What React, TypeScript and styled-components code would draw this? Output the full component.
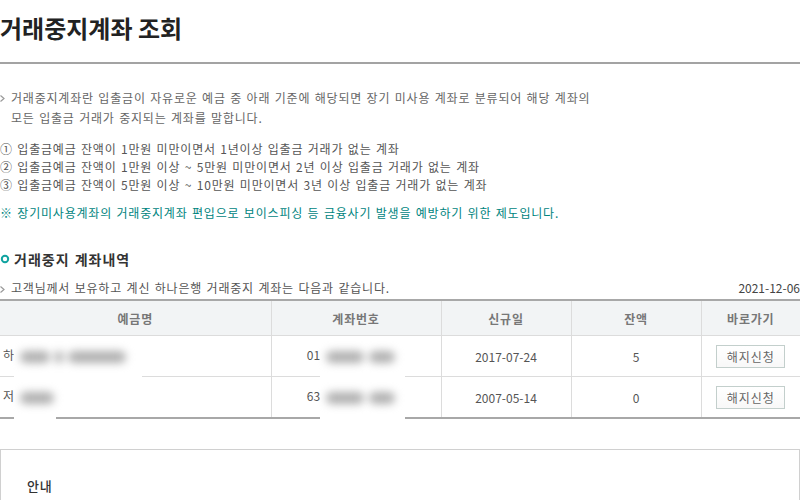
import React from "react";
import styled, { createGlobalStyle } from "styled-components";

// --- 전역 스타일 ---
const GlobalStyle = createGlobalStyle`
  html, body {
    margin: 0;
    padding: 0;
    background: #fff;
  }
  body {
    font-family: "Noto Sans CJK KR", "Noto Sans", sans-serif;
    font-size: 12px;
    color: #555;
  }
`;

// --- 데이터 ---
type Account = {
  head: string;
  nameBlur: number[];
  nameWidth: number;
  accHead: string;
  opened: string;
  balance: string;
};

const accounts: Account[] = [
  { head: "하", nameBlur: [30, 8, 58], nameWidth: 128, accHead: "01", opened: "2017-07-24", balance: "5" },
  { head: "저", nameBlur: [34], nameWidth: 42, accHead: "63", opened: "2007-05-14", balance: "0" },
];

const rules = [
  "① 입출금예금 잔액이 1만원 미만이면서 1년이상 입출금 거래가 없는 계좌",
  "② 입출금예금 잔액이 1만원 이상 ~ 5만원 미만이면서 2년 이상 입출금 거래가 없는 계좌",
  "③ 입출금예금 잔액이 5만원 이상 ~ 10만원 미만이면서 3년 이상 입출금 거래가 없는 계좌",
];

// --- 레이아웃 ---
const Page = styled.div`
  width: 800px;
  letter-spacing: 0.8px;
  word-spacing: 1px;
`;

const Header = styled.header`
  height: 64px;
  border-bottom: 2px solid #a3a3a3;
  box-sizing: border-box;
  padding-top: 15px;
`;

const Title = styled.h1`
  margin: 0;
  font-size: 24px;
  line-height: 26px;
  font-weight: 700;
  color: #222;
  letter-spacing: 0;
  word-spacing: 0;
`;

const Intro = styled.div`
  margin-top: 24px;
  display: flex;
  color: #666;
  line-height: 20px;
`;

const Bullet = styled.span`
  flex: 0 0 11px;
  display: flex;
  justify-content: flex-start;
  padding-top: 7px;
  height: 6px;
`;

const RuleList = styled.ul`
  list-style: none;
  margin: 12px 0 0;
  padding: 0;
  line-height: 18px;
  color: #555;
`;

const Notice = styled.p`
  margin: 10px 0 0;
  line-height: 18px;
  color: #00847e;
`;

const SectionTitle = styled.h2`
  margin: 28px 0 0;
  display: flex;
  align-items: center;
  gap: 4px;
  font-size: 14px;
  line-height: 18px;
  font-weight: 700;
  color: #333;
  letter-spacing: 1px;
`;

const SubRow = styled.div`
  margin-top: 11px;
  display: flex;
  align-items: center;
  justify-content: space-between;
  line-height: 18px;
`;

const SubText = styled.span`
  display: flex;
  color: #555;
`;

const DateText = styled.span`
  color: #444;
  letter-spacing: 0;
`;

// --- 테이블 ---
const Table = styled.table`
  margin-top: 2px;
  width: 800px;
  border-collapse: collapse;
  table-layout: fixed;
  border-top: 2px solid #a8a8a8;
  border-bottom: 2px solid #a8a8a8;
`;

const Th = styled.th`
  height: 34px;
  padding: 0;
  background: #f2f4f5;
  color: #777;
  font-weight: 700;
  font-size: 12px;
  text-align: center;
  border-left: 1px solid #dcdcdc;
  border-bottom: 1px solid #dcdcdc;
  &:first-child {
    border-left: none;
  }
`;

const Td = styled.td<{ $align?: "left" | "center" }>`
  height: 40px;
  padding: 0 0 0 ${(p) => (p.$align === "left" ? "3px" : "0")};
  text-align: ${(p) => p.$align ?? "center"};
  color: #555;
  letter-spacing: 0;
  border-left: 1px solid #dcdcdc;
  border-bottom: 1px solid #dcdcdc;
  white-space: nowrap;
  &:first-child {
    border-left: none;
  }
`;

const Mask = styled.span<{ $w: number }>`
  position: relative;
  display: inline-block;
  vertical-align: middle;
  width: ${(p) => p.$w}px;
  height: 18px;
  &::before {
    content: "";
    position: absolute;
    left: 0;
    right: 0;
    top: -8px;
    bottom: -14px;
    background: #fff;
  }
`;

const Blobs = styled.span`
  position: relative;
  display: flex;
  align-items: center;
  height: 18px;
  padding-left: 6px;
  filter: blur(4.5px);
`;

const Blob = styled.span<{ $w: number }>`
  display: block;
  flex: 0 0 ${(p) => p.$w}px;
  height: 12px;
  margin-right: 5px;
  background: #b0b0b0;
  border-radius: 6px;
`;

const CancelButton = styled.button`
  width: 69px;
  height: 23px;
  padding: 0;
  border: 1px solid #c3cfcc;
  background: linear-gradient(#fff, #f8f8f8);
  color: #666;
  font-family: inherit;
  font-size: 12px;
  letter-spacing: 1px;
  cursor: pointer;
`;

// --- 안내 박스 ---
const InfoBox = styled.section`
  margin-top: 30px;
  width: 800px;
  box-sizing: border-box;
  border: 1px solid #d0d0d0;
  border-bottom: none;
  padding: 27px 26px 20px;
`;

const InfoTitle = styled.h3`
  margin: 0;
  font-size: 13px;
  line-height: 18px;
  font-weight: 500;
  color: #333;
`;

// --- 아이콘 ---
const Chevron = () => (
  <svg width="5" height="7" viewBox="0 0 5 7">
    <path d="M0.5 0.5 L4 3.5 L0.5 6.5" fill="none" stroke="#9a9a9a" strokeWidth="1.2" />
  </svg>
);

const Ring = () => (
  <svg width="10" height="10" viewBox="0 0 10 10">
    <circle cx="5" cy="5" r="3.2" fill="none" stroke="#11a3a0" strokeWidth="2" />
  </svg>
);

const App = () => (
  <>
    <GlobalStyle />
    <Page>
      <Header>
        <Title>거래중지계좌 조회</Title>
      </Header>

      <Intro>
        <Bullet>
          <Chevron />
        </Bullet>
        <span>
          거래중지계좌란 입출금이 자유로운 예금 중 아래 기준에 해당되면 장기 미사용 계좌로 분류되어 해당 계좌의
          <br />
          모든 입출금 거래가 중지되는 계좌를 말합니다.
        </span>
      </Intro>

      <RuleList>
        {rules.map((r) => (
          <li key={r}>{r}</li>
        ))}
      </RuleList>

      <Notice>※ 장기미사용계좌의 거래중지계좌 편입으로 보이스피싱 등 금융사기 발생을 예방하기 위한 제도입니다.</Notice>

      <SectionTitle>
        <Ring />
        거래중지 계좌내역
      </SectionTitle>

      <SubRow>
        <SubText>
          <Bullet>
            <Chevron />
          </Bullet>
          고객님께서 보유하고 계신 하나은행 거래중지 계좌는 다음과 같습니다.
        </SubText>
        <DateText>2021-12-06</DateText>
      </SubRow>

      <Table>
        <colgroup>
          <col style={{ width: 271 }} />
          <col style={{ width: 170 }} />
          <col style={{ width: 130 }} />
          <col style={{ width: 130 }} />
          <col style={{ width: 99 }} />
        </colgroup>
        <thead>
          <tr>
            <Th>예금명</Th>
            <Th>계좌번호</Th>
            <Th>신규일</Th>
            <Th>잔액</Th>
            <Th>바로가기</Th>
          </tr>
        </thead>
        <tbody>
          {accounts.map((a) => (
            <tr key={a.opened}>
              <Td $align="left">
                {a.head}
                <Mask $w={a.nameWidth}>
                  <Blobs>
                    {a.nameBlur.map((w, i) => (
                      <Blob key={i} $w={w} />
                    ))}
                  </Blobs>
                </Mask>
              </Td>
              <Td>
                {a.accHead}
                <Mask $w={85}>
                  <Blobs>
                    <Blob $w={38} />
                    <Blob $w={26} />
                  </Blobs>
                </Mask>
              </Td>
              <Td>{a.opened}</Td>
              <Td>{a.balance}</Td>
              <Td>
                <CancelButton type="button">해지신청</CancelButton>
              </Td>
            </tr>
          ))}
        </tbody>
      </Table>

      <InfoBox>
        <InfoTitle>안내</InfoTitle>
      </InfoBox>
    </Page>
  </>
);

export default App;
